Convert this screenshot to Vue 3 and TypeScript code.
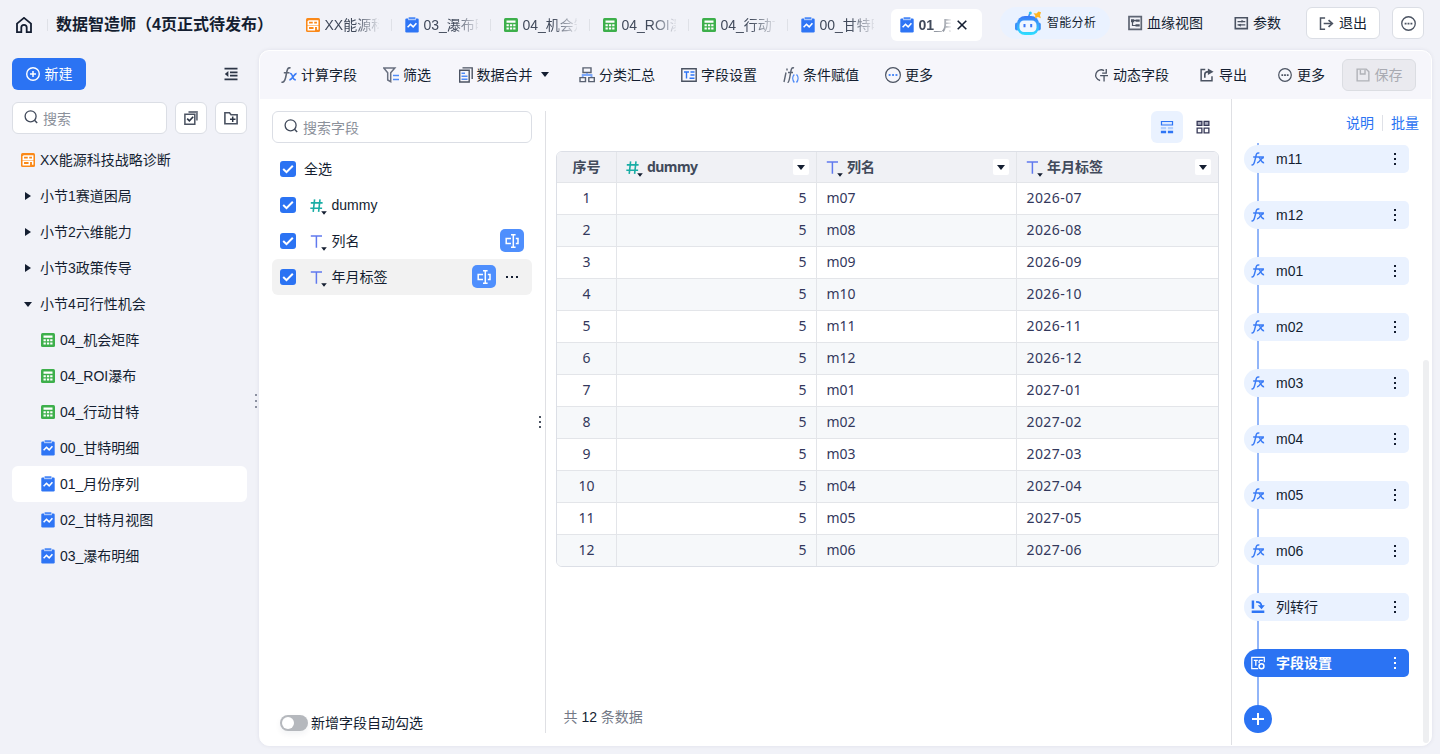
<script setup lang="ts">
import { ref } from 'vue'

interface Tab { icon: string; label: string; active?: boolean }
interface TreeNode { icon: string; label: string; level: number; selected?: boolean }
interface Tool { icon: string; label: string; caret?: boolean }
interface Field { type: 'num' | 'text'; name: string; renamed?: boolean; hover?: boolean }
interface Step { icon: string; label: string; active?: boolean }

const icons: Record<string, string> = {
  home: '<path d="M1 6.600 8 .9l7 5.700V15.100h-4.300V10.500a2.700 2.700 0 0 0-5.400 0V15.100H1z" fill="none" stroke="#141e31" stroke-width="1.800"/>',
  board: '<rect x="1" y="1" width="14" height="14" rx="1.500" fill="#fa8919"/><path d="M3.300 4h5.200v3.300M3.300 4v3.300h9.400V4H8.500M3.300 9.300h6v3.400h-6zM9.300 9.300h3.400v3.400" fill="none" stroke="#fff" stroke-width="1.500"/>',
  table: '<rect x="1" y="1" width="14" height="14" rx="1.500" fill="#3daf4b"/><path d="M3.500 3.500h9v2.300h-9zM3.500 7.200h2.300v2H3.500zM6.900 7.200h2.300v2H6.900zM10.200 7.200h2.300v2h-2.300zM3.500 10.500h2.300v2H3.500zM6.900 10.500h2.300v2H6.900zM10.200 10.500h2.300v2h-2.300z" fill="#fff"/>',
  chart: '<rect x="1.300" y="1.500" width="13.400" height="14" rx="1.200" fill="#2e75f5"/><path d="M4 .3h8v2.900H4z" fill="#a9c6fb"/><path d="M5 .3h6v1.700H5z" fill="#4e8bf7"/><path d="m3.600 10.300 2.900-3 2.700 2.600 3.200-3.700" fill="none" stroke="#fff" stroke-width="1.600"/>',
  plusCircle: '<circle cx="7" cy="7" r="6.300" fill="none" stroke="#fff" stroke-width="1.400"/><path d="M7 4v6M4 7h6" stroke="#fff" stroke-width="1.500"/>',
  collapse: '<path d="M.5 1.700h13M6 5.300h7.500M6 8.700h7.500M.5 12.300h13" stroke="#2c3546" stroke-width="1.700"/><path d="M.8 7l3.600-3v6z" fill="#2c3546"/>',
  search: '<circle cx="6.600" cy="6.300" r="5.500" fill="none" stroke="#414a5b" stroke-width="1.300"/><path d="m10.500 10.300 2.700 2.800" stroke="#414a5b" stroke-width="1.400"/>',
  multi: '<path d="M.9 3.300h9.900v9.900H.9z" fill="none" stroke="#4b5362" stroke-width="1.500"/><path d="M4.500 1h8.400v8.500" fill="none" stroke="#737986" stroke-width="1.900"/><path d="m3.200 7.600 2.200 2.200 3.800-4" fill="none" stroke="#2c3546" stroke-width="1.600"/>',
  folder: '<path d="M.9 1.700h4.600l1.500 2h6.100v9H.9z" fill="none" stroke="#4b5362" stroke-width="1.600"/><path d="M6 8.200h5.500M8.700 5.500v5.400" stroke="#2c3546" stroke-width="1.500"/>',
  fx: '<path d="M9.600 1.100C6.500-.3 6 3.300 5.300 7.300S3.500 16.200.5 15.100M2.800 5.700h5.700" fill="none" stroke="#5d6574" stroke-width="1.600"/><path d="M8.800 6.600c3-1.400 2.600 7.500 6 6M15.600 6.600c-2.400-.5-4.400 6.700-7.300 6.200" fill="none" stroke="#3b7cf6" stroke-width="1.600"/>',
  filter: '<path d="M.8 1.100h11L7.700 5.700v9l-3-1.700V5.700z" fill="none" stroke="#697080" stroke-width="1.500"/><path d="M10 8.500h6M10 12.500h6" stroke="#4f8bf7" stroke-width="1.500"/>',
  merge: '<path d="M2.700 3.300h9.500V15H2.700z" fill="none" stroke="#4b5362" stroke-width="1.400"/><path d="M5.500.9h9.700V12" fill="none" stroke="#4b5362" stroke-width="1.400"/><path d="M4.500 6.200H8M4.500 9.200h6M4.500 12.200h6" stroke="#4f8bf7" stroke-width="1.500"/>',
  group: '<path d="M4 .9h8v4.600H4zM1 10.600h5.500v4H1zM9.800 10.600h5.500v4H9.800z" fill="none" stroke="#596171" stroke-width="1.400"/><path d="M3.700 10V8h8.800v2M8 6v2" fill="none" stroke="#7da8f9" stroke-width="1.900"/>',
  fieldset: '<path d="M.8 1.800h14.400v12.400H.8z" fill="none" stroke="#4b5362" stroke-width="1.400"/><path d="M3 5h5M5.500 5v6.500M9.500 5h4M9.500 8h4M8.500 11.200h5" stroke="#2e75f5" stroke-width="1.400"/>',
  iff: '<path d="M3 5.500 1 15M4.200 1.500l-.4 2M11 1C8-.2 8 4 7.200 8S6 15.500 4.500 15.700M5 5.500h5" fill="none" stroke="#5d6574" stroke-width="1.400"/><path d="M11.300 7.500c-2 2-2 5.500 0 8M13.500 7.500c2 2 2 5.500 0 8" fill="none" stroke="#4f8bf7" stroke-width="1.400"/>',
  moreBlue: '<circle cx="8" cy="8" r="7.400" fill="none" stroke="#4b5362" stroke-width="1.200"/><path d="M3.700 7.100h1.900V9H3.700zM7.100 7.100H9V9H7.100zM10.500 7.100h1.900V9h-1.900z" fill="#4f8bf7"/>',
  more: '<circle cx="8" cy="8" r="7.200" fill="none" stroke="#4b5362" stroke-width="1.400"/><path d="M3.900 7.100h2V9h-2zM7 7.100h2V9H7zM10.100 7.100h2V9h-2z" fill="#4b5362"/>',
  dynamic: '<path d="M11.500 3A6.200 6.200 0 1 0 7 14.300M14 1v4.800H9.300M7 8.700h9M11.500 8.700V15.500" fill="none" stroke="#4b5362" stroke-width="1.500"/>',
  export: '<path d="M6 1.800H1.300v12.900h12.400V9.500" fill="none" stroke="#4b5362" stroke-width="1.700"/><path d="M5.500 11V7.500c0-2.300 1-3.300 4.500-3.300" fill="none" stroke="#4b5362" stroke-width="1.900"/><path d="m9 .5 6.500 3.700L9 8z" fill="#4b5362"/>',
  save: '<path d="M1.300 1.300h10.400l3 3v10.400H1.300z" fill="none" stroke="#b0b2b8" stroke-width="1.600"/><path d="M5 2v4.800h5.300V2" fill="none" stroke="#b0b2b8" stroke-width="1.600"/>',
  lineage: '<path d="M2 1.700h12.300v12.600H2z" fill="none" stroke="#5e6573" stroke-width="1.700"/><path d="M4 4.300h3.300v2.900H4zM8.500 4.500h4.200v2.200H8.500zM8.500 9.300h4.200v2.200H8.500z" fill="#4b5362"/><path d="M5.500 6v4.500h4M5 5.500h4" fill="none" stroke="#4b5362" stroke-width="1.200"/>',
  params: '<path d="M2.300 2.700h12v10.900h-12z" fill="none" stroke="#4b5362" stroke-width="1.600"/><path d="M4.500 6.600h7.800M4.500 9.900h7.800" stroke="#4b5362" stroke-width="1.400"/><path d="m8.500 4.700 2.800 1.900-2.800 1zM7.800 8.700 5 9.900l2.800 1.900z" fill="#4b5362"/>',
  exit: '<path d="M6.500 2H1.600v12h4.900M5 8h8.500" fill="none" stroke="#4b5362" stroke-width="1.600"/><path d="m10.200 4.300 4 3.700-4 3.700" fill="none" stroke="#4b5362" stroke-width="1.800"/>',
  rows: '<path d="M1.700 1.700h12.600v4H1.700z" fill="#dce9ff" stroke="#2e75f5" stroke-width="1.400"/><path d="M1 8h6v2.500H1zM9 8h6v2.500H9z" fill="#b4d0fd"/><path d="M1 12.200h6V15H1zM9 12.200h6V15H9z" fill="#2e75f5"/>',
  grid: '<path d="M1.300 1.500h5.400v4.600H1.300zM9.300 1.500h5.400v4.600H9.300z" fill="#a9abbd" stroke="#363857" stroke-width="1.500"/><path d="M1.300 9.200h5.400v5.500H1.300zM9.300 9.200h5.400v5.500H9.300z" fill="#fff" stroke="#363857" stroke-width="1.500"/>',
  stepFx: '<path d="M9.600 1.300C5.800.2 6 3.500 5 7.500S3.400 15.500.6 14.600M2.500 5.800h12.300M6.800 12.200c3 .8 4.200-6 8-5.900M8.700 6c2.300 0 2.300 6.600 6.300 6.200" fill="none" stroke="#3b7cf6" stroke-width="1.700"/>',
  pivot: '<path d="M.8.700h2.800v9.200H.8zM.8 12H15.200v2.900H.8z" fill="#2e75f5"/><path d="M5.800 2.200c4.200 0 6.200 1 6.200 5" fill="none" stroke="#2e75f5" stroke-width="1.900"/><path d="M7.800 6h8L12 10.600z" fill="#2e75f5"/>',
  stepSet: '<path d="M15.200 7V1.500H.9v12.900h7.300" fill="none" stroke="#fff" stroke-width="1.400"/><path d="M3.200 5h4.600M5.500 5v6.200M9.300 5h4.200M9.300 5v3" fill="none" stroke="#fff" stroke-width="1.500"/><circle cx="12" cy="11.700" r="2.800" fill="none" stroke="#fff" stroke-width="1.700"/>',
  num: '<path d="M4.600.3 3.200 12.800M10 .3 8.600 12.800M.8 3.900h11.800M.3 9.200h11.800" stroke="#19ada5" stroke-width="1.600"/><path d="M11.200 12.300h5.600L14 15.700z" fill="#141e31"/>',
  text: '<path d="M.8 1h11.200M6.400 1v11.700" stroke="#6079ee" stroke-width="1.500"/><path d="M11.200 12.300h5.600L14 15.700z" fill="#141e31"/>',
  rename: '<path d="M7 5.400H2.200v5.200H7M11.800 5.400H14v5.200h-2.200M7 1.700h4.600M9.300 1.700v12.600M7 14.300h4.600" fill="none" stroke="#fff" stroke-width="1.500"/>',
  check: '<path d="m3.200 8 3.300 3.200 6.300-6.400" fill="none" stroke="#fff" stroke-width="2"/>',
}

const tabs: Tab[] = [
  { icon: 'board', label: 'XX能源科技战略诊断' },
  { icon: 'chart', label: '03_瀑布明细' },
  { icon: 'table', label: '04_机会矩阵' },
  { icon: 'table', label: '04_ROI瀑布' },
  { icon: 'table', label: '04_行动甘特' },
  { icon: 'chart', label: '00_甘特明细' },
  { icon: 'chart', label: '01_月份序列', active: true },
]

const tree: TreeNode[] = [
  { icon: 'board', label: 'XX能源科技战略诊断', level: 0 },
  { icon: 'right', label: '小节1赛道困局', level: 0 },
  { icon: 'right', label: '小节2六维能力', level: 0 },
  { icon: 'right', label: '小节3政策传导', level: 0 },
  { icon: 'down', label: '小节4可行性机会', level: 0 },
  { icon: 'table', label: '04_机会矩阵', level: 1 },
  { icon: 'table', label: '04_ROI瀑布', level: 1 },
  { icon: 'table', label: '04_行动甘特', level: 1 },
  { icon: 'chart', label: '00_甘特明细', level: 1 },
  { icon: 'chart', label: '01_月份序列', level: 1, selected: true },
  { icon: 'chart', label: '02_甘特月视图', level: 1 },
  { icon: 'chart', label: '03_瀑布明细', level: 1 },
]

const tools: Tool[] = [
  { icon: 'fx', label: '计算字段' },
  { icon: 'filter', label: '筛选' },
  { icon: 'merge', label: '数据合并', caret: true },
  { icon: 'group', label: '分类汇总' },
  { icon: 'fieldset', label: '字段设置' },
  { icon: 'iff', label: '条件赋值' },
  { icon: 'moreBlue', label: '更多' },
]
const rightTools: Tool[] = [
  { icon: 'dynamic', label: '动态字段' },
  { icon: 'export', label: '导出' },
  { icon: 'more', label: '更多' },
]

const fields: Field[] = [
  { type: 'num', name: 'dummy' },
  { type: 'text', name: '列名', renamed: true },
  { type: 'text', name: '年月标签', renamed: true, hover: true },
]

const months = [7, 8, 9, 10, 11, 12, 1, 2, 3, 4, 5, 6]
const rows = months.map((m, i) => {
  const mm = String(m).padStart(2, '0')
  return { no: i + 1, dummy: 5, name: `m${mm}`, label: `${i < 6 ? 2026 : 2027}-${mm}` }
})

const steps: Step[] = [
  ...['m11', 'm12', 'm01', 'm02', 'm03', 'm04', 'm05', 'm06'].map(label => ({ icon: 'stepFx', label })),
  { icon: 'pivot', label: '列转行' },
  { icon: 'stepSet', label: '字段设置', active: true },
]

const autoCheck = ref(false)
</script>

<template>
  <div class="app">
    <header class="top">
      <svg class="home" viewBox="0 0 16 16" v-html="icons.home"></svg>
      <i class="vline title-line"></i>
      <h1>数据智造师（4页正式待发布）</h1>
      <nav class="tabs">
        <div v-for="t in tabs" :key="t.label" class="tab" :class="{ active: t.active }">
          <svg class="i16" viewBox="0 0 16 16" v-html="icons[t.icon]"></svg>
          <span class="tab-label">{{ t.label }}</span>
          <svg v-if="t.active" class="close" viewBox="0 0 10 10"><path d="M.7.7l8.600 8.600M9.300.7.700 9.300" stroke="#141e31" stroke-width="1.600" /></svg>
        </div>
      </nav>
      <div class="ai">
        <svg class="robot" viewBox="0 0 28 26">
          <defs><linearGradient id="bot" x1="0" y1="0" x2="0" y2="1"><stop offset="0" stop-color="#3a78f8" /><stop offset="1" stop-color="#2ee0ff" /></linearGradient></defs>
          <path d="M14.500 7 16 3" stroke="#3a8cf8" stroke-width="1.600" />
          <circle cx="16.300" cy="2.900" r="1.500" fill="#2cc4f4" />
          <rect x="1" y="12.500" width="4" height="8" rx="2" fill="#3c90f8" />
          <rect x="22.800" y="12.500" width="4" height="8" rx="2" fill="#3c90f8" />
          <rect x="3" y="6" width="22" height="19" rx="8" fill="url(#bot)" />
          <rect x="5.500" y="10.500" width="17" height="11.500" rx="4.500" fill="#f0f7ff" />
          <path d="M10.500 14v3.200M17.200 14v3.200" stroke="#3a78f8" stroke-width="2" />
          <path d="m27 2.300-1 3 .8 3-2.900-1.200L21 8.500l.3-3L19.500 3.300l3 .2 2-1.900z" fill="#ffb41f" />
        </svg>
        <span>智能分析</span>
      </div>
      <div class="link lineage"><svg class="i16" viewBox="0 0 16 16" v-html="icons.lineage"></svg>血缘视图</div>
      <div class="link params"><svg class="i16" viewBox="0 0 16 16" v-html="icons.params"></svg>参数</div>
      <button class="btn exit"><svg class="i15" viewBox="0 0 16 16" v-html="icons.exit"></svg>退出</button>
      <button class="btn square"><svg class="i15" viewBox="0 0 16 16" v-html="icons.more"></svg></button>
    </header>

    <div class="body">
      <aside class="side">
        <div class="side-row">
          <button class="create"><svg viewBox="0 0 14 14" v-html="icons.plusCircle"></svg>新建</button>
          <svg class="collapse" viewBox="0 0 14 14" v-html="icons.collapse"></svg>
        </div>
        <div class="side-row tools-row">
          <div class="search"><svg viewBox="0 0 14 14" v-html="icons.search"></svg><span>搜索</span></div>
          <button class="btn square"><svg class="i14" viewBox="0 0 14 14" v-html="icons.multi"></svg></button>
          <button class="btn square"><svg class="i14" viewBox="0 0 14 14" v-html="icons.folder"></svg></button>
        </div>
        <ul class="tree">
          <li v-for="n in tree" :key="n.label" :class="{ child: n.level, selected: n.selected }">
            <span class="tree-icon">
              <i v-if="n.icon === 'right'" class="arrow-right"></i>
              <i v-else-if="n.icon === 'down'" class="arrow-down"></i>
              <svg v-else class="i16" viewBox="0 0 16 16" v-html="icons[n.icon]"></svg>
            </span>
            <span>{{ n.label }}</span>
          </li>
        </ul>
        <span class="grip side-grip"><i></i><i></i><i></i></span>
      </aside>

      <main class="panel">
        <div class="toolbar">
          <div v-for="t in tools" :key="t.label" class="tool">
            <svg class="i16" viewBox="0 0 16 16" v-html="icons[t.icon]"></svg>
            <span>{{ t.label }}</span>
            <i v-if="t.caret" class="arrow-down caret"></i>
          </div>
          <div class="tool-end">
            <div v-for="t in rightTools" :key="t.label" class="tool-r">
              <svg class="i14" viewBox="0 0 16 16" v-html="icons[t.icon]"></svg>
              <span>{{ t.label }}</span>
            </div>
            <button class="save"><svg class="i14" viewBox="0 0 16 16" v-html="icons.save"></svg>保存</button>
          </div>
        </div>

        <div class="work">
          <section class="fields">
            <div class="search wide"><svg viewBox="0 0 14 14" v-html="icons.search"></svg><span>搜索字段</span></div>
            <div class="field">
              <span class="box"><svg viewBox="0 0 16 16" v-html="icons.check"></svg></span>
              <span class="all">全选</span>
            </div>
            <div v-for="f in fields" :key="f.name" class="field" :class="{ hover: f.hover }">
              <span class="box"><svg viewBox="0 0 16 16" v-html="icons.check"></svg></span>
              <svg class="type" viewBox="0 0 17 16" v-html="icons[f.type]"></svg>
              <span class="fname">{{ f.name }}</span>
              <span v-if="f.renamed" class="rename"><svg viewBox="0 0 16 16" v-html="icons.rename"></svg></span>
              <span v-if="f.hover" class="dots"><i></i><i></i><i></i></span>
            </div>
            <div class="auto">
              <span class="switch" :class="{ on: autoCheck }" @click="autoCheck = !autoCheck"><i></i></span>
              <span>新增字段自动勾选</span>
            </div>
            <span class="grip field-grip"><i></i><i></i><i></i></span>
          </section>

          <section class="preview">
            <div class="views">
              <span class="view on"><svg viewBox="0 0 16 16" v-html="icons.rows"></svg></span>
              <span class="view"><svg viewBox="0 0 16 16" v-html="icons.grid"></svg></span>
            </div>
            <div class="grid">
              <div class="tr th">
                <div class="td no">序号</div>
                <div class="td"><svg class="type" viewBox="0 0 17 16" v-html="icons.num"></svg><span class="latin">dummy</span><b class="filter"><i class="arrow-down"></i></b></div>
                <div class="td"><svg class="type" viewBox="0 0 17 16" v-html="icons.text"></svg><span>列名</span><b class="filter"><i class="arrow-down"></i></b></div>
                <div class="td"><svg class="type" viewBox="0 0 17 16" v-html="icons.text"></svg><span>年月标签</span><b class="filter"><i class="arrow-down"></i></b></div>
              </div>
              <div v-for="r in rows" :key="r.no" class="tr">
                <div class="td no">{{ r.no }}</div>
                <div class="td right">{{ r.dummy }}</div>
                <div class="td">{{ r.name }}</div>
                <div class="td date">{{ r.label }}</div>
              </div>
            </div>
            <div class="count">共 <em>12</em> 条数据</div>
          </section>

          <section class="flow">
            <div class="flow-head"><a>说明</a><i></i><a>批量</a></div>
            <div class="steps">
              <div v-for="s in steps" :key="s.label" class="step" :class="{ active: s.active }">
                <svg class="i14" viewBox="0 0 16 16" v-html="icons[s.icon]"></svg>
                <span>{{ s.label }}</span>
                <b class="kebab"><i></i><i></i><i></i></b>
              </div>
              <button class="add"><svg viewBox="0 0 12 12"><path d="M6 0v12M0 6h12" stroke="#fff" stroke-width="2" /></svg></button>
            </div>
            <i class="scroll"></i>
          </section>
        </div>
      </main>
    </div>
  </div>
</template>

<style>
body {
  margin: 0;
  background: #f1f2f8;
}
</style>

<style scoped>
* { box-sizing: border-box; }
.app {
  width: 1440px;
  height: 754px;
  overflow: hidden;
  display: flex;
  flex-direction: column;
  background: #f1f2f8;
  color: #141e31;
  font: 14px/20px "Liberation Sans", "Noto Sans CJK SC", sans-serif;
}
svg { display: block; flex: none; }
button { font: inherit; color: inherit; margin: 0; padding: 0; }
.i16 { width: 16px; height: 16px; }
.i15 { width: 15px; height: 15px; }
.i14 { width: 14px; height: 14px; }

.top { height: 50px; display: flex; align-items: center; flex: none; white-space: nowrap; }
.home { width: 16px; height: 16px; margin-left: 16px; }
.vline { width: 1px; height: 12px; background: #dfe1e7; }
.title-line { margin: 0 8px 0 15px; }
h1 { margin: 0; width: 241px; font-size: 16px; line-height: 24px; font-weight: 700; }
.tabs { display: flex; gap: 8px; }
.tab {
  position: relative;
  width: 91px;
  height: 32px;
  border-radius: 6px;
  padding: 0 8px;
  display: flex;
  align-items: center;
  color: #414a5b;
}
.tab:not(.active):not(:nth-child(6))::after {
  content: "";
  position: absolute;
  left: 94px;
  top: 10px;
  width: 1px;
  height: 12px;
  background: #dfe1e7;
}
.tab-label {
  width: 54px;
  margin-left: 3.500px;
  overflow: hidden;
  -webkit-mask-image: linear-gradient(90deg, #000 55%, transparent 104%);
  mask-image: linear-gradient(90deg, #000 55%, transparent 104%);
}
.tab.active { background: #fff; font-weight: 700; }
.tab.active .tab-label { width: 32px; }
.close { width: 10px; height: 10px; margin-left: 6.500px; }
.ai {
  width: 110px;
  height: 32px;
  margin: -5px 0 0 18px;
  border-radius: 16px;
  background: #eaf2ff;
  display: flex;
  align-items: center;
  padding-left: 14px;
  font-size: 12px;
}
.ai span { letter-spacing: .3px; }
.robot { width: 28px; height: 26px; margin-right: 5px; }
.link { display: flex; align-items: center; gap: 4px; margin-top: -4px; }
.lineage { margin-left: 17px; }
.params { margin-left: 30px; }
.btn {
  height: 32px;
  border: 1px solid #dbdee5;
  border-radius: 6px;
  background: #fff;
  display: flex;
  align-items: center;
  justify-content: center;
}
.square { width: 32px; flex: none; }
.exit { width: 74px; gap: 5px; margin: -4px 12px 0 auto; }
.top .square { margin: -4px 16px 0 0; }

.body { flex: 1; display: flex; min-height: 0; }
.side { position: relative; width: 259px; padding: 8px 12px; flex: none; }
.side-row { display: flex; align-items: center; gap: 8px; width: 235px; }
.tools-row { margin-top: 12px; }
.create {
  width: 74px;
  height: 32px;
  border: 0;
  border-radius: 6px;
  background: #2b73f3;
  color: #fff;
  display: flex;
  align-items: center;
  justify-content: center;
  gap: 5px;
}
.create svg { width: 14px; height: 14px; }
.collapse { width: 14px; height: 14px; margin-left: auto; margin-right: 9px; }
.search {
  flex: 1;
  height: 32px;
  border: 1px solid #dbdee5;
  border-radius: 6px;
  background: #fff;
  color: #8c919b;
  display: flex;
  align-items: center;
  padding-left: 11px;
}
.search svg { width: 14px; height: 14px; margin: -2px 5px 0 0; }
.search span { padding-top: 1px; }
.tree { list-style: none; margin: 8px 0 0; padding: 0; width: 235px; }
.tree li { height: 36px; display: flex; align-items: center; padding-left: 8px; border-radius: 6px; gap: 4px; }
.tree .child { padding-left: 28px; }
.tree .selected { background: #fff; }
.tree-icon { width: 16px; display: flex; justify-content: center; }
.arrow-right { border-left: 6px solid #141e31; border-top: 4.500px solid transparent; border-bottom: 4.500px solid transparent; }
.arrow-down { border-top: 5px solid #141e31; border-left: 4.500px solid transparent; border-right: 4.500px solid transparent; }
.grip { position: absolute; display: flex; flex-direction: column; gap: 4px; }
.grip i { width: 2px; height: 2px; background: #8b90a0; }
.side-grip { left: 255px; top: 344px; }

.panel {
  width: 1173px;
  height: 696px;
  border-radius: 10px;
  border: 1px solid #fff;
  background: #fff;
  overflow: hidden;
  box-shadow: 0 0 4px rgba(20, 30, 60, .08);
  display: flex;
  flex-direction: column;
}
.toolbar {
  height: 48px;
  flex: none;
  background: #f6f6fb;
  display: flex;
  align-items: center;
  gap: 26px;
  padding: 0 15px 0 21px;
}
.tool { display: flex; align-items: center; gap: 4px; }
.caret { margin: -2px 4px 0 5px; }
.tool:nth-child(3) { gap: 3.500px; }
.tool-end { margin-left: auto; display: flex; align-items: center; }
.tool-r { display: flex; align-items: center; gap: 5px; margin-right: 31px; }
.tool-r:nth-child(3) { margin-right: 17px; }
.save {
  width: 74px;
  height: 32px;
  border: 1px solid #dbdde2;
  border-radius: 6px;
  background: #eaeaef;
  color: #a9abb2;
  display: flex;
  align-items: center;
  justify-content: center;
  gap: 5px;
}
.work { flex: 1; display: flex; min-height: 0; }

.fields {
  position: relative;
  width: 286px;
  margin: 12px 0;
  padding: 0 13px 0 12px;
  border-right: 1px solid #dfe0e4;
  display: flex;
  flex-direction: column;
}
.search.wide { flex: none; margin-bottom: 8px; }
.field { height: 36px; border-radius: 6px; padding: 0 8px; display: flex; align-items: center; }
.field.hover { background: #f2f2f2; }
.box { width: 16px; height: 16px; border-radius: 3px; background: #2b73f3; }
.all { margin-left: 8px; }
.type { width: 17px; height: 16px; position: relative; top: 2px; }
.field .type { margin-left: 14px; }
.fname { margin-left: 4.500px; }
.rename {
  width: 24px;
  height: 23px;
  margin: -1px 0 0 auto;
  border-radius: 5px;
  background: #4f8ffd;
  display: flex;
  align-items: center;
  justify-content: center;
}
.rename svg { width: 16px; height: 16px; }
.dots { width: 28px; display: flex; gap: 3px; padding-left: 10px; }
.dots i { width: 2px; height: 2px; background: #141e31; }
.auto { margin-top: auto; display: flex; align-items: center; gap: 3px; padding-left: 8px; }
.switch { width: 28px; height: 16px; border-radius: 8px; background: #b5b8bd; padding: 2px; box-shadow: 0 3px 6px rgba(20, 30, 60, .06); }
.switch i { display: block; width: 12px; height: 12px; border-radius: 50%; background: #fff; }
.switch.on { background: #2b73f3; }
.switch.on i { margin-left: 12px; }
.field-grip { left: 278.500px; top: 305px; gap: 3px; }
.field-grip i { background: #4b5362; }

.preview { width: 685px; padding: 12px 12px 0 10px; display: flex; flex-direction: column; }
.views { display: flex; justify-content: flex-end; gap: 4px; height: 40px; }
.view { width: 32px; height: 32px; border-radius: 6px; display: flex; align-items: center; justify-content: center; }
.view.on { background: #eaf2ff; }
.view svg { width: 14px; height: 14px; }
.grid {
  width: 663px;
  border: 1px solid #dcdfe6;
  border-radius: 6px;
  overflow: hidden;
  color: #33385c;
  font-family: "Noto Sans", "Noto Sans CJK SC", sans-serif;
}
.tr { display: grid; grid-template-columns: 60px 200px 200px 1fr; height: 32px; border-top: 1px solid #e3e5e9; }
.tr:nth-child(odd):not(.th) { background: #f6f8fa; }
.tr.th { height: 30px; border-top: 0; background: #f0f1f5; font-weight: 700; color: #414a5b; }
.td { display: flex; align-items: center; padding: 0 9.500px 2px; border-right: 1px solid #e3e5e9; }
.th .td { padding: 0 9px; }
.td:last-child { border-right: 0; }
.td.no { justify-content: center; padding-left: 0; padding-right: 0; }
.td.right { justify-content: flex-end; }
.date { letter-spacing: .42px; }
.th .type + span { margin-left: 4px; }
.th .latin { letter-spacing: -.55px; }
.filter { width: 16px; height: 16px; margin-left: auto; margin-right: -2px; border-radius: 2px; background: #fff; display: flex; align-items: center; justify-content: center; }
.count { margin: auto 0 18px 7.500px; color: #737986; }
.count em { font-style: normal; color: #141e31; }

.flow { position: relative; width: 200px; border-left: 1px solid #dfe0e4; }
.flow-head { height: 44px; padding: 14px 12px 0 0; display: flex; justify-content: flex-end; color: #2b73f3; }
.flow-head i { width: 1px; height: 16px; margin: 2px 8px 0; background: #dfe1e7; }
.steps {
  margin-left: 12px;
  padding-top: 2px;
  display: flex;
  flex-direction: column;
  gap: 28px;
  width: 165px;
  background: linear-gradient(#92b5f8, #92b5f8) 13px 0 / 2px 100% no-repeat;
}
.step { height: 28px; border-radius: 14px 5px 5px 14px; background: #eaf2ff; display: flex; align-items: center; padding: 0 13px 0 7px; }
.step span { margin-left: 11px; }
.step.active { background: #2b73f3; color: #fff; font-weight: 700; }
.kebab { margin-left: auto; display: flex; flex-direction: column; gap: 3px; }
.kebab i { width: 2px; height: 2px; background: #141e31; }
.active .kebab i { background: #fff; }
.add { width: 28px; height: 28px; border: 0; border-radius: 50%; background: #2b73f3; display: flex; align-items: center; justify-content: center; }
.add svg { width: 12px; height: 12px; }
.scroll { position: absolute; right: 2px; top: 261px; width: 6px; height: 383px; border-radius: 3px; background: #eeeff1; }
</style>
